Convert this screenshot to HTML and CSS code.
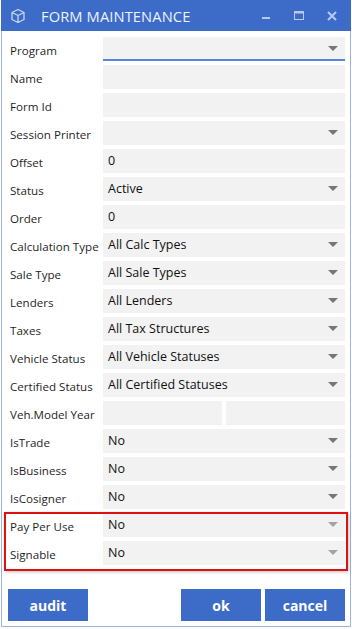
FILE: index.html
```html
<!DOCTYPE html>
<html>
<head>
<meta charset="utf-8">
<link rel="stylesheet" href="styles.css">
</head>
<body>
<div class="window">
  <div class="titlebar">
    <svg class="app-icon" width="16" height="16" viewBox="0 0 16 16"><path d="M8 1.5 L14 4.5 L14 11.5 L8 14.5 L2 11.5 L2 4.5 Z M2 4.5 L8 7.5 L14 4.5 M8 7.5 L8 14.5" fill="none" stroke="#c9d6f2" stroke-width="1.3" stroke-linejoin="round"/></svg>
    <span class="title">FORM MAINTENANCE</span>
    <span class="controls">
      <svg width="12" height="12" viewBox="0 0 12 12"><rect x="2" y="7" width="8" height="2" fill="#b8c9ee"/></svg>
      <svg width="12" height="12" viewBox="0 0 12 12"><rect x="1.5" y="1.5" width="9" height="8" fill="none" stroke="#b8c9ee" stroke-width="1"/><rect x="1.5" y="1.5" width="9" height="2" fill="#b8c9ee"/></svg>
      <svg width="12" height="12" viewBox="0 0 12 12"><path d="M2 2 L10 10 M10 2 L2 10" stroke="#b8c9ee" stroke-width="2"/></svg>
    </span>
  </div>
  <div class="form">
    <div class="row"><span class="label">Program</span><div class="field select focused"></div></div>
    <div class="row"><span class="label">Name</span><div class="field"></div></div>
    <div class="row"><span class="label">Form Id</span><div class="field"></div></div>
    <div class="row"><span class="label">Session Printer</span><div class="field select"></div></div>
    <div class="row"><span class="label">Offset</span><div class="field">0</div></div>
    <div class="row"><span class="label">Status</span><div class="field select">Active</div></div>
    <div class="row"><span class="label">Order</span><div class="field">0</div></div>
    <div class="row"><span class="label">Calculation Type</span><div class="field select">All Calc Types</div></div>
    <div class="row"><span class="label">Sale Type</span><div class="field select">All Sale Types</div></div>
    <div class="row"><span class="label">Lenders</span><div class="field select">All Lenders</div></div>
    <div class="row"><span class="label">Taxes</span><div class="field select">All Tax Structures</div></div>
    <div class="row"><span class="label">Vehicle Status</span><div class="field select">All Vehicle Statuses</div></div>
    <div class="row"><span class="label">Certified Status</span><div class="field select">All Certified Statuses</div></div>
    <div class="row"><span class="label">Veh.Model Year</span><div class="pair"><div class="field"></div><div class="field"></div></div></div>
    <div class="row"><span class="label">IsTrade</span><div class="field select">No</div></div>
    <div class="row"><span class="label">IsBusiness</span><div class="field select">No</div></div>
    <div class="row"><span class="label">IsCosigner</span><div class="field select">No</div></div>
    <div class="row"><span class="label">Pay Per Use</span><div class="field select light">No</div></div>
    <div class="row"><span class="label">Signable</span><div class="field select light">No</div></div>
    <div class="highlight"></div>
  </div>
  <div class="footer">
    <button class="btn">audit</button>
    <span class="spacer"></span>
    <button class="btn">ok</button>
    <button class="btn">cancel</button>
  </div>
</div>
</body>
</html>
```
FILE: styles.css
```css
html, body {
  margin: 0;
  padding: 0;
  background: #ffffff;
}
body {
  font-family: "Open Sans", "Noto Sans", sans-serif;
  color: #1a1a1a;
}
.window {
  width: 348px;
  height: 626px;
  margin-left: 1px;
  border: 1px solid #9fb2e0;
  border-top: none;
  background: #ffffff;
  display: flex;
  flex-direction: column;
  position: relative;
}
.titlebar {
  height: 31px;
  margin: 0 -1px;
  background: #3c6bc8;
  display: flex;
  align-items: center;
  color: #eef2fb;
}
.app-icon {
  margin-left: 9px;
  margin-right: 15px;
}
.title {
  font-size: 14.7px;
  letter-spacing: 0.1px;
  flex: 1;
}
.controls {
  display: flex;
  align-items: center;
  gap: 21px;
  margin-right: 13px;
}
.form {
  position: relative;
  padding: 6px 5px 0 0;
  display: flex;
  flex-direction: column;
  gap: 4px;
}
.row {
  display: flex;
  align-items: center;
  height: 24px;
}
.label {
  width: 93px;
  padding-left: 8px;
  padding-top: 2px;
  font-size: 11.6px;
  color: #1f1f1f;
  white-space: nowrap;
}
.field {
  flex: 1;
  height: 24px;
  box-sizing: border-box;
  background: #f2f2f2;
  font-size: 12.5px;
  line-height: 24px;
  padding-left: 5px;
  position: relative;
  color: #111;
}
.field.focused {
  border-bottom: 2px solid #5b86d8;
  height: 24px;
}
.select::after {
  content: "";
  position: absolute;
  right: 7px;
  top: 9px;
  border-left: 5px solid transparent;
  border-right: 5px solid transparent;
  border-top: 5px solid #767676;
}
.select.light::after {
  border-top-color: #a3a3a3;
}
.pair {
  flex: 1;
  display: flex;
  gap: 4px;
}
.highlight {
  position: absolute;
  left: 2px;
  top: 481px;
  width: 340px;
  height: 55px;
  border: 2px solid #e01010;
  box-shadow: 1px 1px 3px rgba(0,0,0,0.25);
  pointer-events: none;
}
.footer {
  display: flex;
  gap: 4px;
  padding: 24px 5px 0 6px;
}
.spacer {
  flex: 1;
}
.btn {
  width: 80px;
  height: 32px;
  border: none;
  background: #3c6bc8;
  color: #ffffff;
  font-family: "Open Sans", "Noto Sans", sans-serif;
  font-weight: 700;
  font-size: 14px;
  padding: 0;
}
```
